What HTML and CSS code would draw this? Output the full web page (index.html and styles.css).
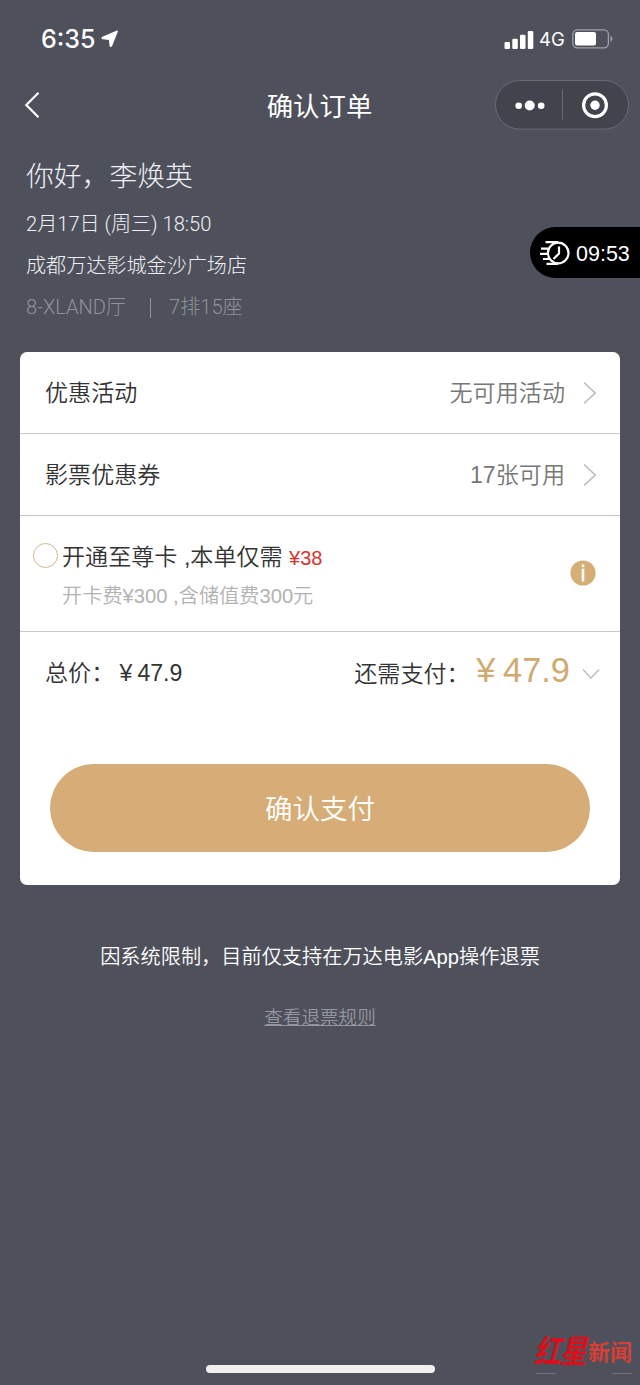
FILE: index.html
```
<!DOCTYPE html>
<html lang="zh-CN">
<head>
<meta charset="utf-8">
<title>确认订单</title>
<link rel="stylesheet" href="styles.css">
</head>
<body>
<div class="screen">
  <header class="status">
    <span class="clock">6:35</span>
    <svg class="location" width="18" height="18" viewBox="0 0 18 18"><path d="M16.200 1.200 10.500 15.800Q9.700 16.800 9.200 15.500L8.600 9.400 1.800 8.600Q.6 8 1.700 7.300Z" fill="#fff" stroke="#fff" stroke-width="1.400" stroke-linejoin="round"/></svg>
    <svg class="signal" width="30" height="19" viewBox="0 0 30 19" fill="#fff"><rect x=".5" y="12" width="5.5" height="7" rx="1.3"/><rect x="8.3" y="8.8" width="5.5" height="10.2" rx="1.3"/><rect x="16" y="4.8" width="5.5" height="14.2" rx="1.3"/><rect x="23.8" y="1" width="5.5" height="18" rx="1.3"/></svg>
    <span class="network">4G</span>
    <svg class="battery" width="42" height="20" viewBox="0 0 42 20"><rect x=".8" y=".8" width="35.6" height="18" rx="4.5" fill="none" stroke="#a0a1a9" stroke-width="1.3"/><rect x="3" y="3" width="21" height="13.6" rx="2" fill="#fff"/><path d="M38.5 6.5q4 3.3 0 6.6z" fill="#a0a1a9"/></svg>
  </header>
  <nav class="nav">
    <svg class="back" width="16" height="28" viewBox="0 0 16 28"><path d="M14.500 1.800 2.300 14 14.500 26.200" fill="none" stroke="#fff" stroke-width="2.200"/></svg>
    <h1 class="title">确认订单</h1>
    <div class="capsule">
      <svg width="134" height="50" viewBox="0 0 134 50"><rect x=".5" y=".5" width="133" height="48.6" rx="24.3" fill="#41434d" stroke="#6a6b75"/><path d="M67.500 9.500v30" stroke="#666872"/><g fill="#fff"><circle cx="23.700" cy="25.800" r="3.300"/><circle cx="34.700" cy="25.500" r="5"/><circle cx="46.200" cy="25.800" r="3.300"/><circle cx="100" cy="25.200" r="4.700"/></g><circle cx="100" cy="25.200" r="11.400" fill="none" stroke="#fff" stroke-width="3.200"/></svg>
    </div>
  </nav>
  <section class="info">
    <h2 class="movie">你好，李焕英</h2>
    <p class="line">2月17日 (周三) 18:50</p>
    <p class="line">成都万达影城金沙广场店</p>
    <p class="line seat"><span class="hall">8-XLAND厅</span><span class="bar"></span><span>7排15座</span></p>
    <div class="timer">
      <svg width="30" height="26" viewBox="0 0 30 26" fill="none" stroke="#fff" stroke-width="2.200"><circle cx="18.200" cy="13" r="10.300"/><path d="M5.500 2.200H18M1 8.600h7.500M0 13.800h8M3 19h6.500M6.500 23.800H18M19 6.500v7l-5.500 5.500"/></svg>
      <span>09:53</span>
    </div>
  </section>
  <main class="card">
    <div class="row">
      <span>优惠活动</span><span class="value">无可用活动</span>
      <svg class="chevron" width="14" height="24" viewBox="0 0 14 24"><path d="M1 1.500 12.200 12 1 22.500" fill="none" stroke="#bcbcbc" stroke-width="1.600"/></svg>
    </div>
    <div class="row">
      <span>影票优惠券</span><span class="value">17张可用</span>
      <svg class="chevron" width="14" height="24" viewBox="0 0 14 24"><path d="M1 1.500 12.200 12 1 22.500" fill="none" stroke="#bcbcbc" stroke-width="1.600"/></svg>
    </div>
    <div class="member">
      <span class="radio"></span>
      <div class="offer">
        <p class="offer-title">开通至尊卡 ,本单仅需 <span class="price">¥38</span></p>
        <p class="offer-note">开卡费¥300 ,含储值费300元</p>
      </div>
      <svg class="hint" width="26" height="26" viewBox="0 0 26 26"><circle cx="13" cy="13" r="12.600" fill="#d4ae74"/><g fill="#fff"><rect x="11.700" y="4.500" width="2.600" height="2.700"/><rect x="11.700" y="8.700" width="2.600" height="12.800"/></g></svg>
    </div>
    <div class="total">
      <span class="sum">总价：<span class="yen">¥</span>47.9</span>
      <span class="due">还需支付：</span><span class="amount"><span class="yen">¥</span>47.9</span>
      <svg class="expand" width="18" height="12" viewBox="0 0 18 12"><path d="M1 1.500 9 10l8-8.500" fill="none" stroke="#b8b8b8" stroke-width="1.200"/></svg>
    </div>
    <button class="pay">确认支付</button>
  </main>
  <p class="notice">因系统限制，目前仅支持在万达电影App操作退票</p>
  <a class="rules">查看退票规则</a>
  <div class="home"></div>
  <div class="watermark"><span class="brush">红星</span><span class="news">新闻</span></div>
</div>
</body>
</html>
```
FILE: styles.css
```
* { box-sizing: border-box; }
body {
  margin: 0;
  background: #4e505b;
  color: #fff;
  font-family: "Liberation Sans", "Noto Sans CJK SC", sans-serif;
  font-weight: 350;
}
h1, h2, p { margin: 0; font-weight: inherit; }
svg { display: block; flex: none; }
.screen {
  position: relative;
  width: 640px;
  height: 1385px;
  overflow: hidden;
  display: flex;
  flex-direction: column;
}
.status {
  height: 80px;
  padding: 0 26px 2px 41px;
  display: flex;
  align-items: center;
  font-family: Inter, sans-serif;
}
.clock { font-size: 25px; font-weight: 500; line-height: 30px; width: 60px; }
.signal { margin-left: auto; }
.network { width: 25px; margin: 0 8px 1px 5px; font-size: 18.500px; font-weight: 400; }
.nav {
  height: 50px;
  padding: 0 11px 0 24px;
  display: grid;
  grid-template-columns: 134px 1fr 134px;
  align-items: center;
}
.title { font-size: 26.400px; line-height: 38px; font-weight: 400; text-align: center; padding: 3px 14px 0 0; }
.info {
  position: relative;
  height: 222px;
  padding: 27px 26px 0;
  color: #eef0f5;
  font-family: Roboto, "Noto Sans CJK SC", sans-serif;
  font-weight: 300;
}
.movie { font-size: 27.800px; line-height: 40px; margin-bottom: 12px; }
.line { font-size: 20.100px; line-height: 30px; margin-bottom: 11.700px; white-space: nowrap; }
.seat { display: flex; align-items: center; color: #8f919b; }
.hall { width: 101px; }
.bar { width: 1px; height: 20px; margin: 2px 18px 0 23px; background: #8f919b; }
.timer {
  position: absolute;
  right: 0;
  top: 97px;
  width: 110px;
  height: 51px;
  padding-left: 10px;
  display: flex;
  align-items: center;
  gap: 6px;
  border-radius: 26px 0 0 26px;
  background: #000;
  color: #fff;
  font-family: "Liberation Sans", sans-serif;
  font-size: 21.500px;
}
.timer span { padding-top: 3px; }
.card {
  width: 600px;
  height: 533px;
  margin: 0 auto;
  background: #fff;
  border-radius: 7px;
  color: #333;
  font-size: 23.100px;
}
.row {
  height: 82px;
  padding: 0 23px 0 25px;
  display: flex;
  align-items: center;
  border-bottom: 1px solid #c8c8ca;
}
.row span { padding-bottom: 4px; }
.value { margin-left: auto; margin-right: 18px; color: #777; }
.member {
  height: 116px;
  padding: 23px 24px 0 13px;
  display: flex;
  border-bottom: 1px solid #c8c8ca;
}
.radio { width: 25px; height: 25px; margin-top: 4px; border: 1px solid #cdbb91; border-radius: 50%; }
.offer { margin-left: 4px; }
.offer-title { line-height: 34px; padding-top: 1px; }
.price { font-size: 20px; color: #d7332f; }
.offer-note { margin-top: 6px; font-size: 20.200px; line-height: 30px; color: #b2b2b2; }
.hint { margin: 21px 0 0 auto; }
.total {
  height: 83px;
  padding: 0 20px 0 25px;
  display: flex;
  align-items: center;
}
.sum { margin-bottom: 6px; }
.yen { display: inline-block; width: 1em; text-align: center; }
.due { margin: 0 0 4px auto; }
.amount { margin-left: -1px; font-size: 34.400px; line-height: 50px; color: #cfab72; margin-bottom: 7px; }
.expand { margin-left: 12px; }
.pay {
  display: block;
  width: 540px;
  height: 88px;
  margin: 49px auto 0;
  padding: 0 0 3px;
  border: 0;
  border-radius: 44px;
  background: #d6ad77;
  color: #fff;
  font: inherit;
  font-size: 27.500px;
}
.notice {
  margin-top: 57px;
  font-size: 20.200px;
  line-height: 30px;
  text-align: center;
}
.rules {
  margin-top: 32px;
  font-size: 18.600px;
  line-height: 28px;
  text-align: center;
  color: #93959f;
  text-decoration: underline;
}
.home { width: 229px; height: 8px; margin: auto auto 12px; border-radius: 4px; background: #f1f0ee; }
.watermark {
  position: absolute;
  left: 536px;
  top: 1330px;
  width: 96px;
  height: 44px;
  display: flex;
  align-items: center;
  justify-content: space-between;
  color: #d9101a;
  font-weight: 700;
  line-height: 43px;
}
.watermark::after {
  content: "";
  position: absolute;
  left: 0;
  right: 0;
  bottom: 0;
  height: 1px;
  background: linear-gradient(90deg, #73717a 20px, transparent 20px, transparent 76px, #73717a 76px);
}
.brush { width: 52px; font-size: 27px; letter-spacing: -1px; transform: skewX(-14deg) scaleY(1.200); }
.news { font-size: 22px; color: #d93e36; }
```
